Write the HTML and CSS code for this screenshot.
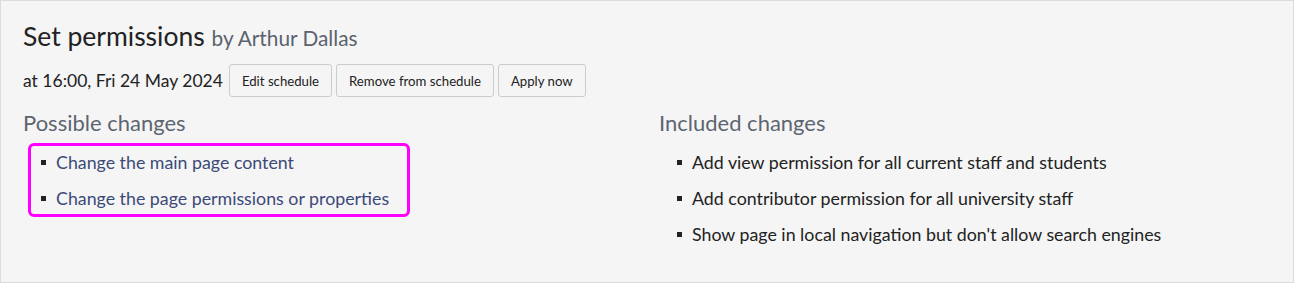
FILE: index.html
```html
<!DOCTYPE html>
<html lang="en">
<head>
    <meta charset="UTF-8">
    <title>Set permissions</title>
    <link rel="stylesheet" href="styles.css">
</head>
<body>
    <div class="panel">
        <h1 class="title">Set permissions <span class="author">by Arthur Dallas</span></h1>
        <div class="schedule">
            <span class="when">at 16:00, Fri 24 May 2024</span>
            <button class="btn">Edit schedule</button>
            <button class="btn">Remove from schedule</button>
            <button class="btn">Apply now</button>
        </div>
        <div class="columns">
            <div class="column">
                <h2>Possible changes</h2>
                <ul class="changes highlight">
                    <li><a href="#">Change the main page content</a></li>
                    <li><a href="#">Change the page permissions or properties</a></li>
                </ul>
            </div>
            <div class="column">
                <h2>Included changes</h2>
                <ul class="changes included">
                    <li>Add view permission for all current staff and students</li>
                    <li>Add contributor permission for all university staff</li>
                    <li>Show page in local navigation but don't allow search engines</li>
                </ul>
            </div>
        </div>
    </div>
</body>
</html>
```

FILE: styles.css
```css
html, body {
    margin: 0;
    padding: 0;
}
body {
    font-family: Lato, "Open Sans", sans-serif;
    color: #222;
    background: #fff;
}
.panel {
    box-sizing: border-box;
    width: 1294px;
    height: 283px;
    background: #f5f5f5;
    border: 1px solid #dcdcdc;
    padding: 17px 22px 0;
}
.title {
    margin: 0;
    font-size: 26.5px;
    font-weight: 400;
    line-height: 36px;
    color: #222;
}
.author {
    font-size: 20.8px;
    color: #5a626d;
}
.schedule {
    display: flex;
    align-items: center;
    gap: 4px;
    margin-top: 8px;
}
.when {
    font-size: 17.5px;
    margin-right: 2px;
}
.btn {
    font-family: Lato, "Open Sans", sans-serif;
    font-size: 13.2px;
    color: #222;
    background: #f5f5f5;
    border: 1px solid #ccc;
    border-radius: 3px;
    height: 33px;
    padding: 0 12px;
}
.columns {
    display: grid;
    grid-template-columns: 610px 1fr;
    gap: 26px;
    margin-top: 11px;
}
h2 {
    margin: 0;
    font-size: 22px;
    font-weight: 400;
    line-height: 30px;
    color: #5d6570;
}
.changes {
    list-style: none;
    margin: 0;
    padding: 0;
    font-size: 17.8px;
}
.changes li {
    position: relative;
    line-height: 31px;
    padding-left: 33px;
}
.changes li + li {
    margin-top: 5px;
}
.changes li::before {
    content: "";
    position: absolute;
    left: 18px;
    top: 13px;
    width: 5px;
    height: 5px;
    background: #222;
}
.highlight {
    width: 376px;
    margin: 5px 0 0 5px;
    padding-top: 1px;
    border: 3px solid #ff00ff;
    border-radius: 6px;
}
.highlight li {
    padding-left: 25px;
}
.highlight li::before {
    left: 10px;
}
.changes a {
    color: #3b4a78;
    text-decoration: none;
}
.included {
    margin-top: 9px;
}
```
